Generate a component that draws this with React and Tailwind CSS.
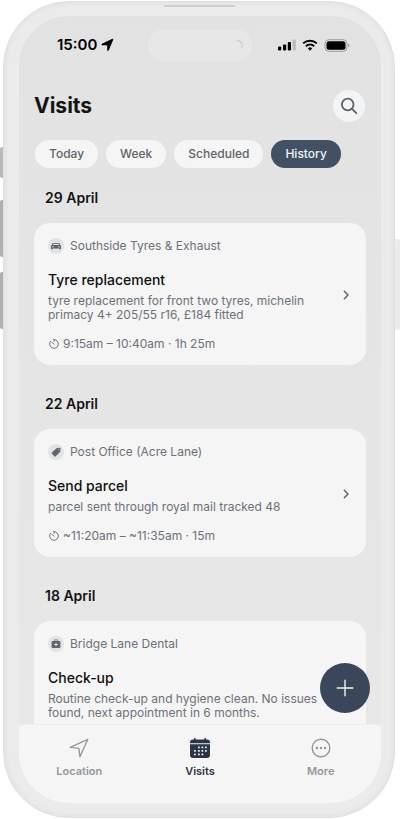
import { useState } from "react";

const filters = ["Today", "Week", "Scheduled", "History"];

const visits = [
    {
        id: 1,
        date: "29 April",
        place: "Southside Tyres & Exhaust",
        icon: "car",
        title: "Tyre replacement",
        note: "tyre replacement for front two tyres, michelin primacy 4+ 205/55 r16, £184 fitted",
        time: "9:15am – 10:40am · 1h 25m",
    },
    {
        id: 2,
        date: "22 April",
        place: "Post Office (Acre Lane)",
        icon: "tag",
        title: "Send parcel",
        note: "parcel sent through royal mail tracked 48",
        time: "~11:20am – ~11:35am · 15m",
    },
    {
        id: 3,
        date: "18 April",
        place: "Bridge Lane Dental",
        icon: "medical",
        title: "Check-up",
        note: "Routine check-up and hygiene clean. No issues found, next appointment in 6 months.",
    },
];

const PlaceIcon = ({ name }) => (
    <span className="flex size-4 shrink-0 items-center justify-center rounded-full bg-[#e2e3e5] text-[#5f646d]">
        <svg viewBox="0 0 16 16" className="size-4" fill="currentColor" aria-hidden="true">
            {name === "car" && (
                <path fillRule="evenodd" d="M5.2 4.9h5.6q.5 0 .7.5l.7 1.700q.8.4.8 1.300v2.900h-1.600v-.9H4.600v.9H3V8.400q0-.9.8-1.300l.7-1.700q.2-.5.7-.5zM5.500 5.800l-.5 1.200h6l-.5-1.200zM5 8a.7.7 0 1 0 0 1.400A.7.7 0 1 0 5 8zm6 0a.7.7 0 1 0 0 1.400A.7.7 0 1 0 11 8z" />
            )}
            {name === "tag" && (
                <path fillRule="evenodd" d="M9 4.100l2.900-.4q.8 0 .7.8l-.3 2.800q-.1.500-.5.900l-4 4q-.8.600-1.500 0L3.900 9.800q-.6-.7 0-1.400l4.200-3.900q.4-.3.900-.4zm1.700.9a.5.5 0 1 0 0 1 .5.5 0 1 0 0-1z" />
            )}
            {name === "medical" && (
                <path fillRule="evenodd" d="M6 4.500q0-1 1-1h2q1 0 1 1v.5h1.400q1 0 1 1v5q0 1-1 1H4.600q-1 0-1-1V6q0-1 1-1H6zm.8.500h2.400v-.7H6.800zm.8 1.700v1.400H6.200v.8h1.400v1.400h.8V8.900h1.400v-.8H8.400V6.700z" />
            )}
        </svg>
    </span>
);

const TimerIcon = () => (
    <svg viewBox="0 0 12 12" className="size-3" fill="none" stroke="currentColor" strokeWidth="1" strokeLinecap="round" aria-hidden="true">
        <path d="M6 1.500a4.400 4.400 0 1 1-3.400 1.600M6 1.500v1.700M6 6.200 4 4.200" />
    </svg>
);

const ChevronIcon = () => (
    <svg viewBox="0 0 12 12" className="size-3 shrink-0 text-[#5b5f65]" fill="none" stroke="currentColor" strokeWidth="1.400" strokeLinecap="round" strokeLinejoin="round" aria-hidden="true">
        <path d="M4.300 2.200 8 6l-3.700 3.800" />
    </svg>
);

const StatusBar = () => (
    <div className="grid h-[58px] shrink-0 grid-cols-[1fr_104px_1fr] items-center text-black">
        <div className="flex items-center gap-[3px] pl-[38px]">
            <span className="text-[15px] font-semibold">15:00</span>
            <svg viewBox="0 0 14 14" className="size-3.5" fill="currentColor" stroke="currentColor" strokeWidth="0.800" strokeLinejoin="round" aria-hidden="true">
                <path d="M12.300 1.200q.8-.3.500.5L8.400 12.200q-.6 1-.8-.2V6.900H2.300q-1-.2-.2-.8z" />
            </svg>
        </div>
        <div className="flex h-8 items-center justify-end rounded-full bg-[#e7e7e7] pr-2">
            <svg viewBox="0 0 12 12" className="size-3" fill="none" aria-hidden="true">
                <path d="M5 1.500a5 5 0 0 1 5 6.500" stroke="#cfcfcf" strokeWidth="1.500" strokeLinecap="round" />
            </svg>
        </div>
        <div className="flex items-center justify-end gap-1.5 pr-[31px]">
            <svg viewBox="0 0 18 12" className="h-3 w-[18px]" fill="currentColor" aria-hidden="true">
                <rect x="0" y="7.500" width="3.200" height="4" rx="1" />
                <rect x="5" y="5.500" width="3.200" height="6" rx="1" />
                <rect x="9.800" y="3" width="3.200" height="8.500" rx="1" />
                <rect x="14.600" y="0.500" width="3.200" height="11" rx="1" fill="#bcbcbc" />
            </svg>
            <svg viewBox="0 0 16 12" className="h-3 w-4" fill="none" stroke="currentColor" strokeWidth="2" aria-hidden="true">
                <path d="M1.200 4.400a9.800 9.800 0 0 1 13.600 0M3.900 7.200a5.900 5.900 0 0 1 8.200 0" />
                <path d="M8 11.700 5.900 9.400a3 3 0 0 1 4.200 0z" fill="currentColor" stroke="none" />
            </svg>
            <svg viewBox="0 0 26 13" className="h-[13px] w-[26px]" aria-hidden="true">
                <rect x="1" y="0.700" width="22" height="11.600" rx="3.800" fill="none" stroke="#9b9b9b" />
                <rect x="2.500" y="2.200" width="19" height="8.600" rx="2.500" fill="#000" />
                <path d="M24.200 4.700q1.300.7 1.300 1.800t-1.300 1.800z" fill="#9b9b9b" />
            </svg>
        </div>
    </div>
);

const VisitCard = ({ visit }) => (
    <section>
        <h2 className="mb-[13px] pl-[11px] text-sm leading-6 font-semibold text-[#141414]">{visit.date}</h2>
        <a href={`#visit-${visit.id}`} className="flex items-center justify-between rounded-2xl bg-[#f5f5f6] pt-[13px] pr-3.5 pb-[11px] pl-3.5">
            <div className="max-w-[274px] text-xs text-[#6d7179]">
                <div className="flex h-5 items-center gap-1.5">
                    <PlaceIcon name={visit.icon} />
                    {visit.place}
                </div>
                <h3 className="mt-3.5 text-sm leading-5 font-medium text-[#101010]">{visit.title}</h3>
                <p className="mt-1 leading-[14px]">{visit.note}</p>
                <div className="mt-3 flex h-5 items-center gap-[3px]">
                    {visit.time && <TimerIcon />}
                    {visit.time}
                </div>
            </div>
            <ChevronIcon />
        </a>
    </section>
);

const TabBar = () => (
    <nav className="grid h-[79px] shrink-0 grid-cols-3 rounded-t-sm border-t border-[#eeeeee] bg-[#f5f5f6] pt-3 text-[11px] font-semibold text-[#94979c]">
        <a href="#location" className="flex flex-col items-center gap-1">
            <svg viewBox="0 0 22 22" className="size-[22px]" fill="none" stroke="currentColor" strokeWidth="1.400" strokeLinejoin="round" aria-hidden="true">
                <path d="M19.800 2.300 12 19.800 10.800 11.400 2.200 10.400z" />
            </svg>
            Location
        </a>
        <a href="#visits" aria-current="page" className="flex flex-col items-center gap-1 text-[#2c3547]">
            <svg viewBox="0 0 22 22" className="size-[22px]" fill="currentColor" aria-hidden="true">
                <path d="M5 1h1.500v1.500h9V1H17v1.500h1q3 0 3 3v.7H1v-.7q0-3 3-3h1z" />
                <path d="M1 7.200h20V18q0 3-3 3H4q-3 0-3-3z" />
                <g fill="#f5f5f6">
                    <rect x="9" y="9.500" width="1.800" height="1.800" rx="0.500" />
                    <rect x="12.500" y="9.500" width="1.800" height="1.800" rx="0.500" />
                    <rect x="16" y="9.500" width="1.800" height="1.800" rx="0.500" />
                    <rect x="5" y="13" width="1.800" height="1.800" rx="0.500" />
                    <rect x="9" y="13" width="1.800" height="1.800" rx="0.500" />
                    <rect x="12.500" y="13" width="1.800" height="1.800" rx="0.500" />
                    <rect x="16" y="13" width="1.800" height="1.800" rx="0.500" />
                    <rect x="5" y="16.500" width="1.800" height="1.800" rx="0.500" />
                    <rect x="9" y="16.500" width="1.800" height="1.800" rx="0.500" />
                    <rect x="12.500" y="16.500" width="1.800" height="1.800" rx="0.500" />
                </g>
            </svg>
            Visits
        </a>
        <a href="#more" className="flex flex-col items-center gap-1">
            <svg viewBox="0 0 22 22" className="size-[22px]" fill="none" stroke="currentColor" strokeWidth="1.400" aria-hidden="true">
                <circle cx="11" cy="11" r="8.800" />
                <g fill="currentColor" stroke="none">
                    <circle cx="6.900" cy="11" r="1.200" />
                    <circle cx="11" cy="11" r="1.200" />
                    <circle cx="15.100" cy="11" r="1.200" />
                </g>
            </svg>
            More
        </a>
    </nav>
);

const App = () => {
    const [active, setActive] = useState("History");

    return (
        <div className="relative h-screen bg-white py-px pr-[5px] pl-[3px] font-['Inter',sans-serif]">
            {/* hardware buttons */}
            <span className="absolute top-[147px] left-0 h-[31px] w-[3px] rounded-l-xs bg-[#b9b9b9]" />
            <span className="absolute top-[200px] left-0 h-[57px] w-[3px] rounded-l-xs bg-[#b0b0b0]" />
            <span className="absolute top-[272px] left-0 h-[57px] w-[3px] rounded-l-xs bg-[#b0b0b0]" />
            <span className="absolute top-[239px] right-0 h-[91px] w-[5px] rounded-r-xs bg-[#ebebeb]" />
            <span className="absolute top-[5px] left-[164px] h-0.5 w-[71px] bg-[#cfcfcf]" />

            <div className="h-full rounded-[66px] border border-[#e0e0e0] bg-[#ebebeb] py-3.5 pr-[13px] pl-[15px] shadow-[inset_0_0_4px_2px_#e3e3e3]">
                <div className="flex h-full flex-col overflow-hidden rounded-[50px] bg-linear-to-b from-[#e2e2e2] to-[#e8e8e8]">
                    <StatusBar />
                    <header className="flex shrink-0 items-center justify-between pt-4 pr-4 pl-[15px]">
                        <h1 className="text-[21px] leading-8 font-bold text-[#141414]">Visits</h1>
                        <button type="button" aria-label="Search" className="flex size-8 items-center justify-center rounded-full bg-[#f3f4f5] text-[#5f6164]">
                            <svg viewBox="0 0 18 18" className="size-[18px]" fill="none" stroke="currentColor" strokeWidth="1.800" strokeLinecap="round" aria-hidden="true">
                                <circle cx="7.700" cy="7.500" r="5.800" />
                                <path d="m12 11.800 4.300 4.400" />
                            </svg>
                        </button>
                    </header>
                    <div className="flex shrink-0 gap-2 px-4 pt-[18px] pb-[18px]">
                        {filters.map((filter) => (
                            <button
                                key={filter}
                                type="button"
                                onClick={() => setActive(filter)}
                                className={`h-7 rounded-full px-3.5 text-xs font-medium ${active === filter ? "bg-[#415063] text-[#eef3f8]" : "bg-[#f5f5f6] text-[#5f6267]"}`}
                            >
                                {filter}
                            </button>
                        ))}
                    </div>
                    <div className="relative min-h-0 flex-1">
                        <main className="flex h-full flex-col gap-[27px] overflow-hidden pr-[15px] pl-[15px]">
                            {visits.map((visit) => (
                                <VisitCard key={visit.id} visit={visit} />
                            ))}
                        </main>
                        <button type="button" aria-label="Add visit" className="absolute right-[11px] bottom-[11px] flex size-[50px] items-center justify-center rounded-full bg-[#3a475b] text-[#eef3f8]">
                            <svg viewBox="0 0 18 18" className="size-[18px]" fill="none" stroke="currentColor" strokeWidth="1.400" strokeLinecap="round" aria-hidden="true">
                                <path d="M9 1.200v15.600M1.200 9h15.600" />
                            </svg>
                        </button>
                    </div>
                    <TabBar />
                </div>
            </div>
        </div>
    );
};

export default App;
